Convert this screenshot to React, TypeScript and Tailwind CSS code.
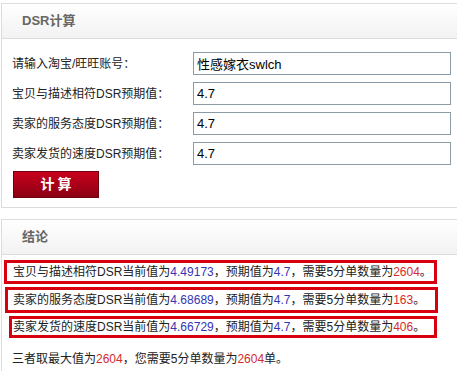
import React from 'react';

const font = { fontFamily: '"Liberation Sans", "Noto Sans CJK SC", sans-serif' };

const rows = [
  { label: '请输入淘宝/旺旺账号：', value: '性感嫁衣swlch' },
  { label: '宝贝与描述相符DSR预期值：', value: '4.7' },
  { label: '卖家的服务态度DSR预期值：', value: '4.7' },
  { label: '卖家发货的速度DSR预期值：', value: '4.7' },
];

const results = [
  { name: '宝贝与描述相符', cur: '4.49173', need: '2604', box: 'ml-[2px] w-[433px] h-[24px] pl-[6px]' },
  { name: '卖家的服务态度', cur: '4.68689', need: '163', box: 'ml-[3px] w-[433px] h-[26px] pl-[5px]' },
  { name: '卖家发货的速度', cur: '4.66729', need: '406', box: 'ml-[7px] w-[428px] h-[22px] pl-px' },
];

function PanelHeader({ title }: { title: string }) {
  return (
    <div className="h-[35px] flex items-center pl-5 bg-gradient-to-b from-white to-[#f2f2f2] border-b border-[#dcdcdc]">
      <span className="text-[13px] font-bold text-[#666]">{title}</span>
    </div>
  );
}

export default function App() {
  return (
    <div className="w-[457px] h-[371px] overflow-hidden bg-white text-[12px] text-[#222]" style={font}>
      {/* DSR计算 */}
      <div className="mt-[3px] ml-px w-[470px] border border-[#dcdcdc]">
        <PanelHeader title="DSR计算" />
        <div className="pt-[13px] pl-[10px] pb-[9px]">
          <div className="flex flex-col gap-[7px]">
            {rows.map((r) => (
              <div key={r.label} className="flex items-center h-[23px]">
                <span className="w-[181px]">{r.label}</span>
                <input
                  readOnly
                  value={r.value}
                  className="w-[258px] h-[23px] border border-[#8c9ca6] px-[3px] text-[13px] text-black outline-none"
                  style={font}
                />
              </div>
            ))}
          </div>
          <button className="mt-[6px] ml-px w-[86px] h-[27px] border border-[#6e0010] bg-gradient-to-b from-[#c9001e] to-[#8c0012] text-white text-[14px] font-bold tracking-[3px] pl-[3px]">
            计算
          </button>
        </div>
      </div>

      {/* 结论 */}
      <div className="mt-[11px] ml-px w-[470px] h-[200px] border border-[#dcdcdc]">
        <PanelHeader title="结论" />
        <div className="pt-[5px] flex flex-col gap-[3px]">
          {results.map((r) => (
            <div key={r.name} className={`${r.box} -ml-px border-[3px] border-[#d8000f] flex items-center whitespace-nowrap`}>
              {r.name}DSR当前值为<span className="text-[#3535b5]">{r.cur}</span>，预期值为
              <span className="text-[#3535b5]">4.7</span>，需要5分单数量为
              <span className="text-[#d22c2c]">{r.need}</span>。
            </div>
          ))}
          <div className="pl-[10px] pt-[9px] whitespace-nowrap">
            三者取最大值为<span className="text-[#d22c2c]">2604</span>，您需要5分单数量为
            <span className="text-[#d22c2c]">2604</span>单。
          </div>
        </div>
      </div>
    </div>
  );
}
